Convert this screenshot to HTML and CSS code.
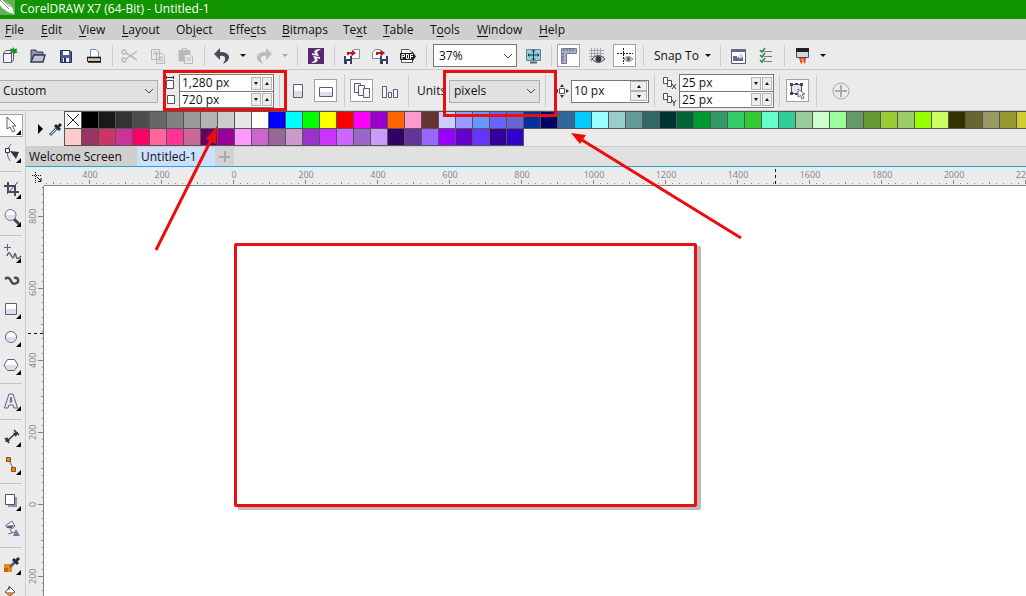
FILE: index.html
```html
<!DOCTYPE html>
<html lang="en">
<head>
<meta charset="utf-8">
<title>CorelDRAW X7 (64-Bit) - Untitled-1</title>
<link rel="stylesheet" href="styles.css">
</head>
<body>
<div class="app">
  <header class="titlebar">
    <svg class="logo" width="15" height="15" viewBox="0 0 15 15"><rect width="15" height="15" fill="#63b05b"/><path d="M3 0L10 5L13 9L14 14L8 12L2 8L0 5V0Z" fill="#fff"/><path d="M0 0L9 9M3 0L10 7" stroke="#63b05b" stroke-width="1"/></svg>
    <h1 class="title">CorelDRAW X7 (64-Bit) - Untitled-1</h1>
  </header>

  <nav class="menubar">
    <button><u>F</u>ile</button><button><u>E</u>dit</button><button><u>V</u>iew</button><button><u>L</u>ayout</button><button>Ob<u>j</u>ect</button><button>Effe<u>c</u>ts</button><button><u>B</u>itmaps</button><button>Te<u>x</u>t</button><button><u>T</u>able</button><button>T<u>o</u>ols</button><button><u>W</u>indow</button><button><u>H</u>elp</button>
  </nav>

  <div class="toolbar standard">
    <button class="tool first" aria-label="New"><svg viewBox="0 0 20 20"><path d="M3.500 7.500H11.500V16.500H3.500ZM3.500 7.500L6 4.500H13.500V14L11.500 16.500" fill="#f4f4fa" stroke="#56576c"/><path d="M11.500 7.500L13.500 5" stroke="#56576c"/><path d="M13 1L14.500 3L17 2.500L16.500 5L18 6.500L15.500 7L14 8L12.500 7L10 7L11 5L10 2.500L12.500 3Z" fill="#1d9327"/></svg></button>
    <button class="tool" aria-label="Open"><svg viewBox="0 0 20 20"><path d="M3 16V4H8L9 6H15V9" fill="#8e91a5" stroke="#343a5e"/><path d="M3 16L6 9H17L15 16Z" fill="#bcc3d3" stroke="#343a5e" stroke-width="1.500"/></svg></button>
    <button class="tool" aria-label="Save"><svg viewBox="0 0 20 20"><path d="M4.500 4.500H14L15.500 6V16.500H4.500Z" fill="#4e5b8f" stroke="#272d58"/><path d="M7 5H13V9H7Z" fill="#fff"/><path d="M7 12H13V16H7Z" fill="#eef"/><path d="M8 12H10V16H8Z" fill="#272d58"/></svg></button>
    <button class="tool" aria-label="Print"><svg viewBox="0 0 20 20"><path d="M6.500 11V3.500H12L14.500 6V11" fill="#fff" stroke="#6990a0"/><path d="M3.500 11V15.500H16.500V11" fill="#d7d7dd" stroke="#222"/><path d="M3 11.500H17M4 16H17" stroke="#111" stroke-width="1.500"/><path d="M5 14H15" stroke="#c2ad66"/></svg></button>
    <i class="sep"></i>
    <button class="tool" aria-label="Cut"><svg viewBox="0 0 20 20" fill="none" stroke="#b9b9b9" stroke-width="1.500"><circle cx="4" cy="6" r="2"/><circle cx="4" cy="14" r="2"/><path d="M6 7L17 14M6 13L17 5"/></svg></button>
    <button class="tool" aria-label="Copy"><svg viewBox="0 0 20 20" fill="#ebebeb" stroke="#b9b9b9"><path d="M3.500 3.500H11.500V13.500H3.500ZM5 6H10M5 8H10M8.500 7.500H14L16.500 10V17.500H8.500ZM10 11H15M10 13H15M10 15H15"/></svg></button>
    <button class="tool" aria-label="Paste"><svg viewBox="0 0 20 20" fill="#ebebeb" stroke="#b9b9b9"><path d="M3 4.500H14V15H3Z" fill="#b9b9b9"/><path d="M6 4V2.500H11V4"/><path d="M8.500 8.500H14L16.500 11V17.500H8.500ZM10 12H15M10 14H15"/></svg></button>
    <i class="sep"></i>
    <button class="tool" aria-label="Undo"><svg viewBox="0 0 20 20"><path d="M8 2L2 8L8 14V10C13 9 15 12 11 18C20 14 19 6 8 6Z" fill="#4b4b5b"/></svg></button>
    <button class="drop" aria-label="Undo list"></button>
    <button class="tool" aria-label="Redo"><svg viewBox="0 0 20 20"><path d="M12 2L18 8L12 14V10C7 9 5 12 9 18C0 14 1 6 12 6Z" fill="#bcbcbc"/></svg></button>
    <button class="drop muted" aria-label="Redo list"></button>
    <i class="sep wide"></i>
    <button class="tool" aria-label="Corel Connect"><svg viewBox="0 0 20 20"><path d="M2 2H18V18H2Z" fill="#57286f"/><path d="M15 3C10 3 7 4 9 8L6 7L6 9L13 10L11 6ZM5 17C10 17 13 16 11 12L14 13V11L7 10L9 14Z" fill="#f3edf5"/></svg></button>
    <i class="sep"></i>
    <button class="tool" aria-label="Import"><svg viewBox="0 0 20 20"><path d="M9.500 6.500L12 3.500H17.500V12.500H9.500Z" fill="#fff" stroke="#8a8d9f"/><path d="M2 10H10V18H2Z" fill="#394066"/><path d="M4 10H8V13H4ZM5 15H8V18H5Z" fill="#fff"/><path d="M5 9V6H10V4L14 7L10 10V8H7V9Z" fill="#bd1714"/></svg></button>
    <button class="tool" aria-label="Export"><svg viewBox="0 0 20 20"><path d="M2.500 6.500L5 3.500H10.500V12.500H2.500Z" fill="#fff" stroke="#8a8d9f"/><path d="M10 10H18V18H10Z" fill="#394066"/><path d="M12 10H16V13H12ZM13 15H16V18H13Z" fill="#fff"/><path d="M6 9V6H11V4L15 7L11 10V8H8V9Z" fill="#bd1714"/></svg></button>
    <button class="tool" aria-label="Publish to PDF"><svg viewBox="0 0 20 20"><path d="M3.500 7V3.500H11L14.500 7V16.500H3.500Z" fill="#fff" stroke="#555"/><path d="M2 7H14V5L18 10.500L14 16V14H2Z" fill="#222"/><path d="M4 13V8.500H6.500V10.500H4M8.500 8V12.500H10.500V8.500H8M12.500 13V8.500H15M13 10.500H15" fill="none" stroke="#fff"/></svg></button>
    <i class="sep"></i>
    <select class="zoom" aria-label="Zoom level"><option>37%</option></select>
    <button class="tool" aria-label="Full-screen preview"><svg viewBox="0 0 20 20"><path d="M3.500 3.500H17.500V14.500H3.500Z" fill="#8ed0e2" stroke="#747c86"/><path d="M7 16.500H14" stroke="#5d646d" stroke-width="2"/><path d="M10.500 4V14M5 9H16M9 5.500L10.500 4L12 5.500M9 12.500L10.500 14L12 12.500M6.500 7.500L5 9L6.500 10.500M14.500 7.500L16 9L14.500 10.500" fill="none" stroke="#102c43"/></svg></button>
    <i class="sep"></i>
    <button class="tool on" aria-label="Show rulers"><svg viewBox="0 0 20 20"><path d="M2.500 2.500H17.500V7.500H7.500V17.500H2.500Z" fill="#a5b0c6" stroke="#717b94"/><path d="M5 3V5M8 3V5M11 3V5M14 3V5M3 8H5M3 11H5M3 14H5" stroke="#4f5872"/></svg></button>
    <button class="tool" aria-label="Show grid"><svg viewBox="0 0 20 20"><path d="M4.500 2V16M7.500 2V16M10.500 2V16M13.500 2V16M2 4.500H17M2 7.500H17M2 10.500H17M2 13.500H10" stroke="#a0a2b5" fill="none"/><path d="M5 13Q11 6 18 13Q11 20 5 13Z" fill="#e5e5e5" stroke="#444"/><circle cx="11.500" cy="13" r="3" fill="#383840"/></svg></button>
    <button class="tool on" aria-label="Show guidelines"><svg viewBox="0 0 20 20"><path d="M8.500 2V18M2 7.500H18" stroke="#222" stroke-dasharray="2 1"/><path d="M9 13Q13 8 18 13Q13 18 9 13Z" fill="#ddd" stroke="#8b8b98"/><circle cx="13.500" cy="13" r="2" fill="#666675"/></svg></button>
    <i class="sep"></i>
    <button class="snap">Snap To</button>
    <i class="sep"></i>
    <button class="tool" aria-label="Options"><svg viewBox="0 0 20 20"><path d="M3.500 3.500H17.500V17.500H3.500Z" fill="#fff" stroke="#555b74"/><path d="M3 3H18V6H3Z" fill="#656b86"/><path d="M5 10H9V12L15 8V15H5Z" fill="#6166a0"/><path d="M11 8H15V11L11 13Z" fill="#d6d8e6"/></svg></button>
    <button class="tool" aria-label="Task list"><svg viewBox="0 0 20 20" fill="none"><path d="M8 5.500H16M8 10.500H16M8 15.500H16" stroke="#747b91"/><path d="M4 4L6 6L9 2M4 9L6 11L9 7M4 14L6 16L9 12" stroke="#387d45" stroke-width="1.500"/></svg></button>
    <i class="sep"></i>
    <button class="tool" aria-label="Application launcher"><svg viewBox="0 0 20 20"><path d="M4.500 3.500H16.500V11.500H4.500Z" fill="#d4d7e3" stroke="#4c5064"/><path d="M4 2H17V6H4Z" fill="#222"/><path d="M7 12H14L13 18L11 15L9 18Z" fill="#e23d20"/><path d="M9 13L11 17L12 13Z" fill="#ffbd3e"/></svg></button>
    <button class="drop" aria-label="Launcher list"></button>
  </div>

  <div class="toolbar property">
    <select class="preset" aria-label="Page size"><option>Custom</option></select>
    <div class="pair-icons">
      <svg viewBox="0 0 10 16"><path d="M1.500 5.500H8.500V13.500H1.500Z" fill="#fff" stroke="#4e4e60"/><path d="M1 2.500H9M1.500 1V4M8.500 1V4" stroke="#333"/></svg>
      <svg viewBox="0 0 10 16"><path d="M2.500 4.500H9.500V12.500H2.500Z" fill="#fff" stroke="#4e4e60"/><path d="M0.500 4V13" stroke="#333" stroke-dasharray="2 1"/></svg>
    </div>
    <div class="pair">
      <div class="field"><input value="1,280 px" aria-label="Page width"><button class="down" aria-label="Decrease"></button><button class="up" aria-label="Increase"></button></div>
      <div class="field"><input value="720 px" aria-label="Page height"><button class="down" aria-label="Decrease"></button><button class="up" aria-label="Increase"></button></div>
    </div>
    <i class="sep wide"></i>
    <button class="tool" aria-label="Portrait"><svg viewBox="0 0 20 20"><path d="M5.500 3.500H14.500V16.500H5.500Z" fill="#fff" stroke="#5a5d73"/><path d="M6 10H14V16H6Z" fill="#dcdde6"/></svg></button>
    <button class="tool on" aria-label="Landscape"><svg viewBox="0 0 20 20"><path d="M3.500 6.500H16.500V15.500H3.500Z" fill="#fff" stroke="#5a5d73"/><path d="M4 11H16V15H4Z" fill="#dcdde6"/></svg></button>
    <i class="sep"></i>
    <button class="tool on" aria-label="All pages"><svg viewBox="0 0 20 20" fill="#f7f7fa" stroke="#5a5d73"><path d="M2.500 2.500H8.500V11.500H2.500Z"/><path d="M6.500 4.500H12.500V14.500H6.500Z"/><path d="M11.500 7.500H17.500V16.500H11.500Z"/></svg></button>
    <button class="tool" aria-label="Current page"><svg viewBox="0 0 20 20" fill="#f7f7fa" stroke="#5a5d73"><path d="M2.500 5.500H6.500V16.500H2.500ZM8.500 11.500H11.500V16.500H8.500ZM13.500 8.500H17.500V16.500H13.500Z"/></svg></button>
    <i class="sep"></i>
    <label class="units" for="units">Units</label>
    <select class="unit-list" id="units"><option>pixels</option></select>
    <i class="sep wide"></i>
    <svg class="nudge-icon" viewBox="0 0 14 14"><path d="M4.500 4.500H9.500V9.500H4.500Z" fill="#fff" stroke="#555"/><path d="M7 0L9 3H5ZM7 14L5 11H9ZM14 7L11 9V5ZM0 7L3 5V9Z" fill="#333"/></svg>
    <div class="field tall"><input value="10 px" aria-label="Nudge distance"><span class="stack"><button class="up" aria-label="Increase"></button><button class="down" aria-label="Decrease"></button></span></div>
    <i class="sep wide"></i>
    <div class="pair-icons dup">
      <svg viewBox="0 0 16 16"><path d="M1.500 2.500H5.500V8.500H1.500ZM5.500 5.500H9.500V11.500H5.500Z" fill="#fff" stroke="#4e4e60"/><path d="M10 9L14 14M14 9L10 14" stroke="#333"/></svg>
      <svg viewBox="0 0 16 16"><path d="M1.500 2.500H5.500V8.500H1.500ZM5.500 5.500H9.500V11.500H5.500Z" fill="#fff" stroke="#4e4e60"/><path d="M10 9L12 12L14 9M12 12V15" fill="none" stroke="#333"/></svg>
    </div>
    <div class="pair">
      <div class="field"><input value="25 px" aria-label="Duplicate distance X"><button class="down" aria-label="Decrease"></button><button class="up" aria-label="Increase"></button></div>
      <div class="field"><input value="25 px" aria-label="Duplicate distance Y"><button class="down" aria-label="Decrease"></button><button class="up" aria-label="Increase"></button></div>
    </div>
    <i class="sep wide"></i>
    <button class="tool on" aria-label="Treat as filled"><svg viewBox="0 0 20 20"><path d="M3.500 3.500H13.500V12.500H3.500Z" fill="#e3e4ec" stroke="#555b74"/><path d="M2 2H5V5H2ZM12 2H15V5H12ZM2 11H5V14H2ZM7 2H10V4H7ZM7 12H10V14H7Z" fill="#40465d"/><path d="M10 8L17 13L14 13.500L16 17L14 18L12.500 14.500L10 16Z" fill="#fff" stroke="#686d83"/></svg></button>
    <i class="sep"></i>
    <button class="tool add" aria-label="Customize"><svg viewBox="0 0 20 20" fill="none" stroke="#aaa"><circle cx="10" cy="10" r="8"/><path d="M10 4V16M4 10H16" stroke-width="2"/></svg></button>
  </div>

  <div class="workspace">
    <aside class="toolbox">
      <button class="tool on fly" aria-label="Pick"><svg viewBox="0 0 20 20"><path d="M5 2L14 11L10.500 11L13 16L10.500 17L8 12L5 14Z" fill="#fff" stroke="#5c6076"/></svg></button>
      <button class="tool fly" aria-label="Shape"><svg viewBox="0 0 20 20"><path d="M9 1Q2 9 8 18" fill="none" stroke="#686c82"/><path d="M3.500 5.500H7.500V9.500H3.500Z" fill="#fff" stroke="#333"/><path d="M8 8L17 9L14 16Z" fill="#2f3344"/></svg></button>
      <i class="sep"></i>
      <button class="tool fly" aria-label="Crop"><svg viewBox="0 0 20 20"><path d="M6 3V13H17M2 7H13V17" fill="none" stroke="#454a60" stroke-width="2"/><path d="M5 15L16 3" stroke="#454a60"/></svg></button>
      <button class="tool fly" aria-label="Zoom"><svg viewBox="0 0 20 20"><path d="M12 12L17 17" stroke="#42475a" stroke-width="3"/><circle cx="8.500" cy="8" r="5.500" fill="#dfe0ed" stroke="#737789"/><path d="M4 8A4.500 4.500 0 0 1 13 8Z" fill="#fff"/></svg></button>
      <i class="sep"></i>
      <button class="tool fly" aria-label="Freehand"><svg viewBox="0 0 20 20" fill="none" stroke="#5b6078"><path d="M5.500 1V8M2 4.500H9"/><path d="M5 13Q7 7 9 12T12 13Q13 8 14 13T19 13" stroke-width="1.500"/></svg></button>
      <button class="tool" aria-label="Artistic media"><svg viewBox="0 0 20 20"><path d="M3 8Q7 5 9 10T16 11Q17 6 12 7" fill="none" stroke="#484b59" stroke-width="2.500"/></svg></button>
      <button class="tool fly" aria-label="Rectangle"><svg viewBox="0 0 20 20"><path d="M3.500 4.500H14.500V15.500H3.500Z" fill="#fff" stroke="#5d6078"/><path d="M4 10H14V15H4Z" fill="#dcdde8"/></svg></button>
      <button class="tool fly" aria-label="Ellipse"><svg viewBox="0 0 20 20"><circle cx="9" cy="10" r="5.500" fill="#fff" stroke="#5d6078"/><path d="M4 10H14A5 5 0 0 1 4 10" fill="#dcdde8"/></svg></button>
      <button class="tool fly" aria-label="Polygon"><svg viewBox="0 0 20 20"><path d="M2 10L5.500 4.500H12.500L16 10L12.500 15.500H5.500Z" fill="#fff" stroke="#5d6078"/><path d="M3 10H15L12 15H6Z" fill="#dcdde8"/></svg></button>
      <i class="sep"></i>
      <button class="tool fly" aria-label="Text"><svg viewBox="0 0 20 20"><path d="M2.500 17L7 3H11L15.500 17H12L11 14H7L6 17ZM8 11H10L9 6Z" fill="#e8e9f1" stroke="#5d6078" fill-rule="evenodd"/></svg></button>
      <i class="sep"></i>
      <button class="tool fly" aria-label="Dimension"><svg viewBox="0 0 20 20"><path d="M5 14L14 6M3 11L7 16M12 3L17 8" stroke="#30333f" stroke-width="1.500"/><path d="M3 15L5 10L8 14ZM16 5L11 6L14 10Z" fill="#30333f"/></svg></button>
      <button class="tool fly" aria-label="Connector"><svg viewBox="0 0 20 20"><path d="M7 5L12 15" stroke="#666"/><path d="M4.500 2.500H8.500V6.500H4.500ZM9.500 12.500H13.500V16.500H9.500Z" fill="#e88722" stroke="#874d1b"/></svg></button>
      <i class="sep"></i>
      <button class="tool fly" aria-label="Drop shadow"><svg viewBox="0 0 20 20"><path d="M6 6H15V16H6Z" fill="#9296b2"/><path d="M3.500 3.500H12.500V13.500H3.500Z" fill="#fff" stroke="#4e5268"/></svg></button>
      <button class="tool" aria-label="Transparency"><svg viewBox="0 0 20 20"><path d="M3 7L10 2L13 7Q11 11 8 9L4 8M8 10L10 14M6 15L13 13" fill="#f2f2f5" stroke="#686d83"/><path d="M4 7L12 6L10 9L7 9Z" fill="#505671"/><path d="M14 10L18 17H11Z" fill="#757ca3"/></svg></button>
      <i class="sep"></i>
      <button class="tool fly" aria-label="Color eyedropper"><svg viewBox="0 0 20 20"><path d="M2 9H10V17H2Z" fill="#e88a18"/><path d="M2 13H6V17H2Z" fill="#be6514"/><path d="M8 12L14 6" stroke="#5a6683" stroke-width="3"/><path d="M11 4L16 9M14 6L17 3" stroke="#252a38" stroke-width="3"/></svg></button>
      <button class="tool" aria-label="Interactive fill"><svg viewBox="0 0 20 20"><path d="M8 4L13 9L8 13L3 9Z" fill="#fff" stroke="#454a5d"/><path d="M4 9H12L8 13Z" fill="#e58a27"/><path d="M7 3V7" stroke="#333"/><path d="M12 13H16V18H10Z" fill="#f3c47b"/></svg></button>
    </aside>

    <main class="document">
      <section class="palette">
        <i class="grip"></i>
        <button class="flyout" aria-label="Palette menu"></button>
        <button class="dropper" aria-label="Pick color"><svg viewBox="0 0 14 14"><path d="M1 13L8 6" stroke="#4e7182" stroke-width="3"/><path d="M2 12L7 7" stroke="#dce6ec"/><path d="M6 3L11 8M9 5L12 2" stroke="#252b35" stroke-width="3"/></svg></button>
        <div class="swatches"><div class="row" id="row-a"></div><div class="row" id="row-b"></div></div>
      </section>
      <nav class="tabs"><button class="tab">Welcome Screen</button><button class="tab current">Untitled-1</button><button class="tab plus" aria-label="New document"></button></nav>
      <div class="stage">
        <div class="origin"><svg viewBox="0 0 18 18"><path d="M6.500 3V14M3 6.500H13" stroke="#111" stroke-dasharray="1 1"/><path d="M8 8L12 12M12 9V12.500H9" fill="none" stroke="#111"/></svg></div>
        <div class="ruler across">
          <svg class="ticks" width="100%" height="100%"><defs><pattern id="tx" width="72" height="18" x="45" patternUnits="userSpaceOnUse"><path d="M0 13h1v4h-1zM7 16h1v1h-1zM14 16h1v1h-1zM21 16h1v1h-1zM29 16h1v1h-1zM36 15h1v2h-1zM43 16h1v1h-1zM50 16h1v1h-1zM58 16h1v1h-1zM65 16h1v1h-1z" fill="#858585"/></pattern></defs><rect width="100%" height="18" fill="url(#tx)"/><path d="M731.500 2V17" stroke="#111" stroke-dasharray="3 3"/></svg>
          <div class="marks"><span>400</span><span>200</span><span>0</span><span>200</span><span>400</span><span>600</span><span>800</span><span>1000</span><span>1200</span><span>1400</span><span>1600</span><span>1800</span><span>2000</span><span>2200</span></div>
        </div>
        <div class="ruler along">
          <svg class="ticks" width="100%" height="100%"><defs><pattern id="ty" width="18" height="72" y="30" patternUnits="userSpaceOnUse"><path d="M12 0v1h5v-1zM16 7v1h1v-1zM16 14v1h1v-1zM16 21v1h1v-1zM16 29v1h1v-1zM15 36v1h2v-1zM16 43v1h1v-1zM16 50v1h1v-1zM16 58v1h1v-1zM16 65v1h1v-1z" fill="#858585"/></pattern></defs><rect width="18" height="100%" fill="url(#ty)"/><path d="M2 147.500H17" stroke="#111" stroke-dasharray="3 3"/></svg>
          <div class="marks"><span>800</span><span>600</span><span>400</span><span>200</span><span>0</span><span>200</span></div>
        </div>
        <div class="canvas"><div class="page"></div></div>
      </div>
    </main>
  </div>

  <svg class="notes" width="1026" height="596" viewBox="0 0 1026 596" fill="none" stroke="#ea0e0e" stroke-width="3">
    <rect x="164.500" y="71.500" width="121" height="38"/>
    <rect x="444.500" y="71.500" width="111" height="44"/>
    <path d="M156 250L212 138M741 238L582 140"/>
    <path d="M217 126L216 144L206 139ZM571 133L586 135L580 144Z" fill="#f00a0a" stroke="none"/>
  </svg>
</div>
<script src="palette.js"></script>
</body>
</html>
```

FILE: styles.css
```css
* { box-sizing: border-box; }
body { margin: 0; font: 12px/16px "Open Sans", "Noto Sans", sans-serif; color: #111; background: #ebebeb; }
button, input, select { font: inherit; color: inherit; margin: 0; padding: 0; border: 0; background: none; border-radius: 0; }
svg { display: block; }

.app { position: relative; display: flex; flex-direction: column; height: 100vh; overflow: hidden; }

.titlebar { display: flex; gap: 5px; height: 19px; flex: none; background: #109500; color: #fff; }
.title { margin: 0; font-size: 12px; font-weight: 400; line-height: 18px; }

.menubar { display: grid; grid-template-columns: 36px 38px 43px 54px 53px 53px 61px 40px 47px 47px 62px 40px; flex: none; height: 21px; padding: 1px 0 0 5px; background: #cfcfcf; }
.menubar button { text-align: left; white-space: nowrap; }
.menubar u { text-underline-offset: 2px; }

.toolbar { display: flex; align-items: center; flex: none; padding-top: 2px; border-bottom: 1px solid #cbcbcb; white-space: nowrap; }
.toolbar > * { flex: none; }
.standard { height: 30px; }
.property { height: 41px; }

.tool { position: relative; display: grid; place-items: center; width: 28px; height: 28px; }
.tool svg { width: 20px; height: 20px; }
.tool.first { width: 24px; padding-right: 4px; }
.tool.on::before { content: ""; position: absolute; inset: 2px 3px 3px 2px; border: 1px solid #a3a3a3; background: #fff; }
.tool.on svg { position: relative; }
.sep { align-self: stretch; width: 8px; margin: 3px 0; background: linear-gradient(#cbcbcb, #cbcbcb) center / 1px 100% no-repeat; }
.sep.wide { width: 10px; }
.drop { display: grid; place-items: center; width: 14px; height: 24px; }
.drop::before, .snap::after { content: ""; border: 3px solid transparent; border-top-color: #111; border-bottom: 0; }
.drop.muted::before { border-top-color: #aaa; }

select { appearance: none; height: 23px; border: 1px solid #adadad; line-height: 20px;
  background: url("data:image/svg+xml,%3Csvg xmlns='http://www.w3.org/2000/svg' width='10' height='6'%3E%3Cpath d='M1 1L5 5L9 1' fill='none' stroke='%23444'/%3E%3C/svg%3E") right 3px center no-repeat #e1e1e1; }
.zoom { width: 84px; margin: 0 2px 0 3px; border-color: #777; background-color: #fff; padding-left: 5px; }
.preset { width: 158px; border-left: 0; padding-left: 3px; }
.unit-list { width: 91px; padding-left: 4px; }
.snap { display: flex; align-items: center; justify-content: space-between; width: 69px; padding: 0 5px 0 7px; }

.pair-icons { width: 14px; margin-left: 7px; }
.pair-icons svg { width: 10px; height: 16px; }
.pair-icons.dup { width: 16px; margin: 0 1px 0 3px; }
.pair-icons.dup svg { width: 16px; }
.pair { display: grid; border: 1px solid #777; }
.pair .field + .field { border-top: 1px solid #777; }
.field { display: flex; align-items: center; height: 16px; width: 93px; background: #fff; gap: 1px; padding-right: 1px; }
.field input { flex: 1; min-width: 0; height: 15px; padding-left: 2px; outline: 0; }
.field button { display: grid; place-items: center; width: 10px; height: 13px; border: 1px solid #b5b5b5; background: #ededed; }
.field button::before { content: ""; border: 2px solid transparent; }
.field .down::before { border-top: 3px solid #111; border-bottom: 0; }
.field .up::before { border-bottom: 3px solid #111; border-top: 0; }
.field.tall { width: 78px; height: 23px; border: 1px solid #777; }
.stack { display: grid; }
.field .stack button { width: 17px; height: 10px; }
.units { width: 37px; padding-left: 5px; }
.nudge-icon { width: 14px; height: 14px; margin-left: 5px; margin-right: 2px; }
.add { margin-left: 7px; }

.workspace { display: flex; flex: 1; min-height: 0; }
.toolbox { flex: none; width: 26px; border-right: 1px solid #cbcbcb; overflow: hidden; }
.toolbox .tool { width: 24px; }
.toolbox .tool.on::before { inset: 3px 1px 2px -1px; }
.toolbox .sep { display: block; width: 22px; height: 8px; margin: 0; background: linear-gradient(#c4c4c4, #c4c4c4) center / 100% 1px no-repeat; }
.fly::after { content: ""; position: absolute; right: 3px; bottom: 4px; width: 5px; height: 5px; background: #000; clip-path: polygon(100% 0, 100% 100%, 0 100%); }

.document { display: flex; flex-direction: column; flex: 1; min-width: 0; }
.palette { display: flex; flex: none; height: 36px; border-bottom: 1px solid #cbcbcb; overflow: hidden; }
.grip { width: 3px; margin: 3px 8px 3px 4px; background: repeating-linear-gradient(#bbb 0 2px, transparent 2px 4px); }
.flyout { align-self: center; border: 5px solid transparent; border-left-color: #000; border-right: 0; margin-right: 6px; }
.dropper { align-self: center; width: 12px; }
.dropper svg { width: 14px; height: 14px; }
.swatches { flex: none; margin-left: 3px; }
.row { display: flex; width: max-content; border-left: 1px solid #555; }
.swatch { flex: none; width: 17px; height: 18px; border: 1px solid #555; border-left: 0; }
.row + .row .swatch { border-top: 0; height: 17px; }
.swatch.none { background: #fff; }
.swatch svg { width: 16px; height: 16px; }

.tabs { display: flex; flex: none; height: 19px; background: #e1e1e1; }
.tab { height: 19px; padding: 0 3px; width: 111px; text-align: left; background: #cfcfcf; white-space: nowrap; }
.tab.current { width: 78px; padding-left: 4px; background: #cce0fb; }
.tab.plus { width: 19px; background: linear-gradient(#aaa, #aaa) center / 11px 2px no-repeat, linear-gradient(#aaa, #aaa) center / 2px 11px no-repeat, #d2d2d2; }

.stage { display: grid; grid-template: 19px 1fr / 18px 1fr; flex: 1; min-height: 0; border-top: 1px solid #30a0d8; box-shadow: inset 0 1px #d5eef8; }
.origin svg { width: 18px; height: 18px; margin: 2px 0 0 3px; }
.ruler { position: relative; overflow: hidden; color: #858585; font-size: 9px; line-height: 12px; }
.ticks { position: absolute; inset: 0; }
.across { border-bottom: 1px solid #858585; }
.across .marks { display: flex; width: max-content; padding: 2px 0 0 10px; }
.across .marks span { width: 72px; text-align: center; }
.along { border-right: 1px solid #858585; }
.along .marks { padding: 0 0 0 1px; margin-top: -6px; }
.along .marks span { display: block; width: 12px; height: 72px; text-align: center; writing-mode: vertical-rl; transform: rotate(180deg); }
.canvas { position: relative; overflow: hidden; background: #fff; }
.page { position: absolute; left: 190px; top: 57px; width: 463px; height: 264px; border: 3px solid #e81010; border-radius: 2px; background: #fff; box-shadow: 4px 3px #bdb9b9; }

.notes { position: absolute; left: 0; top: 0; pointer-events: none; }
```

FILE: palette.js
```js
const rows = {
  'row-a': 'none 000000 1a1a1a 333333 4d4d4d 666666 808080 999999 b3b3b3 cccccc e6e6e6 ffffff 0000ff 00ffff 00ff00 ffff00 ff0000 ff00ff 9900cc ff6600 ff99cc 663333 ccccff 9999ff 6699ff 6666ff 6666cc 003399 000066 336699 00ccff 99ffff 99cccc 669999 336666 003333 006633 009933 339966 33cc66 33cc33 66ffcc 33cc99 99cc99 ccffcc 99ff99 669966 669933 99cc33 99cc66 99ff00 ccff66 333300 666633 999966 999933 cccc33',
  'row-b': 'ffcccc 993366 cc3366 cc3399 ff0066 ff6699 ff3399 cc6699 660066 990099 ff99ff cc66cc 996699 cc99cc 9933cc cc33ff cc66ff 9966cc cc99ff 330066 663399 9966ff 9900ff 6600cc 6633ff 330099 3300cc'
};
for (const [id, colors] of Object.entries(rows)) {
  const row = document.getElementById(id);
  for (const color of colors.split(' ')) {
    const swatch = document.createElement('button');
    swatch.className = 'swatch';
    if (color === 'none') {
      swatch.classList.add('none');
      swatch.setAttribute('aria-label', 'No color');
      swatch.innerHTML = '<svg viewBox="0 0 16 16"><path d="M2 2L14 14M14 2L2 14" stroke="#222"/></svg>';
    } else {
      swatch.setAttribute('aria-label', '#' + color);
      swatch.style.background = '#' + color;
    }
    row.append(swatch);
  }
}
```
